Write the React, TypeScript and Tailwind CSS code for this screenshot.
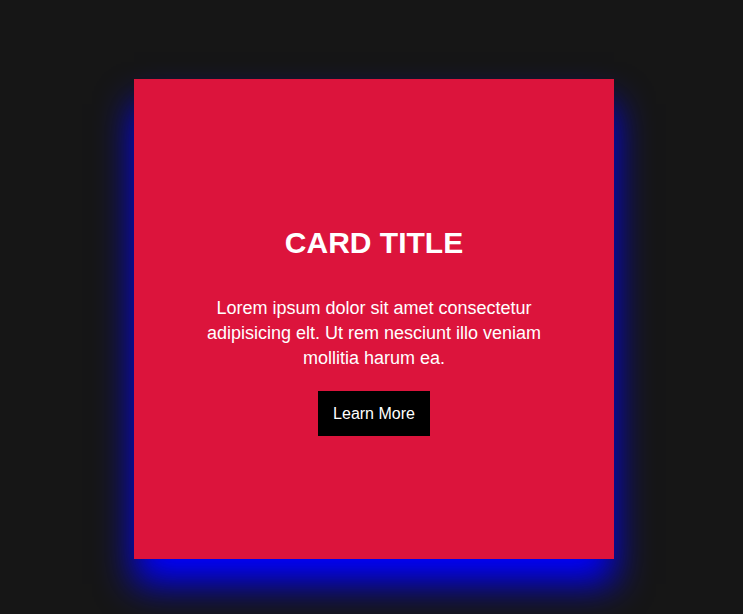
export default function App() {
  return (
    <main className="min-h-[614px] w-full bg-[#161616] pt-[79px] font-['Liberation_Sans',Arial,sans-serif]">
      <div className="mx-[134px] flex h-[480px] w-[480px] flex-col items-center bg-[#dc143c] px-[60px] pt-[148px] text-center text-white shadow-[0_25px_35px_#0000ff]">
        <h2 className="text-[30px] font-bold leading-[32px]">CARD TITLE</h2>
        <p className="mt-[37px] text-[18px] leading-[25px]">
          Lorem ipsum dolor sit amet consectetur adipisicing elt. Ut rem nesciunt illo veniam mollitia harum ea.
        </p>
        <button className="mt-[20px] h-[45px] bg-black px-[15px] text-[16px] text-white">Learn More</button>
      </div>
    </main>
  );
}
